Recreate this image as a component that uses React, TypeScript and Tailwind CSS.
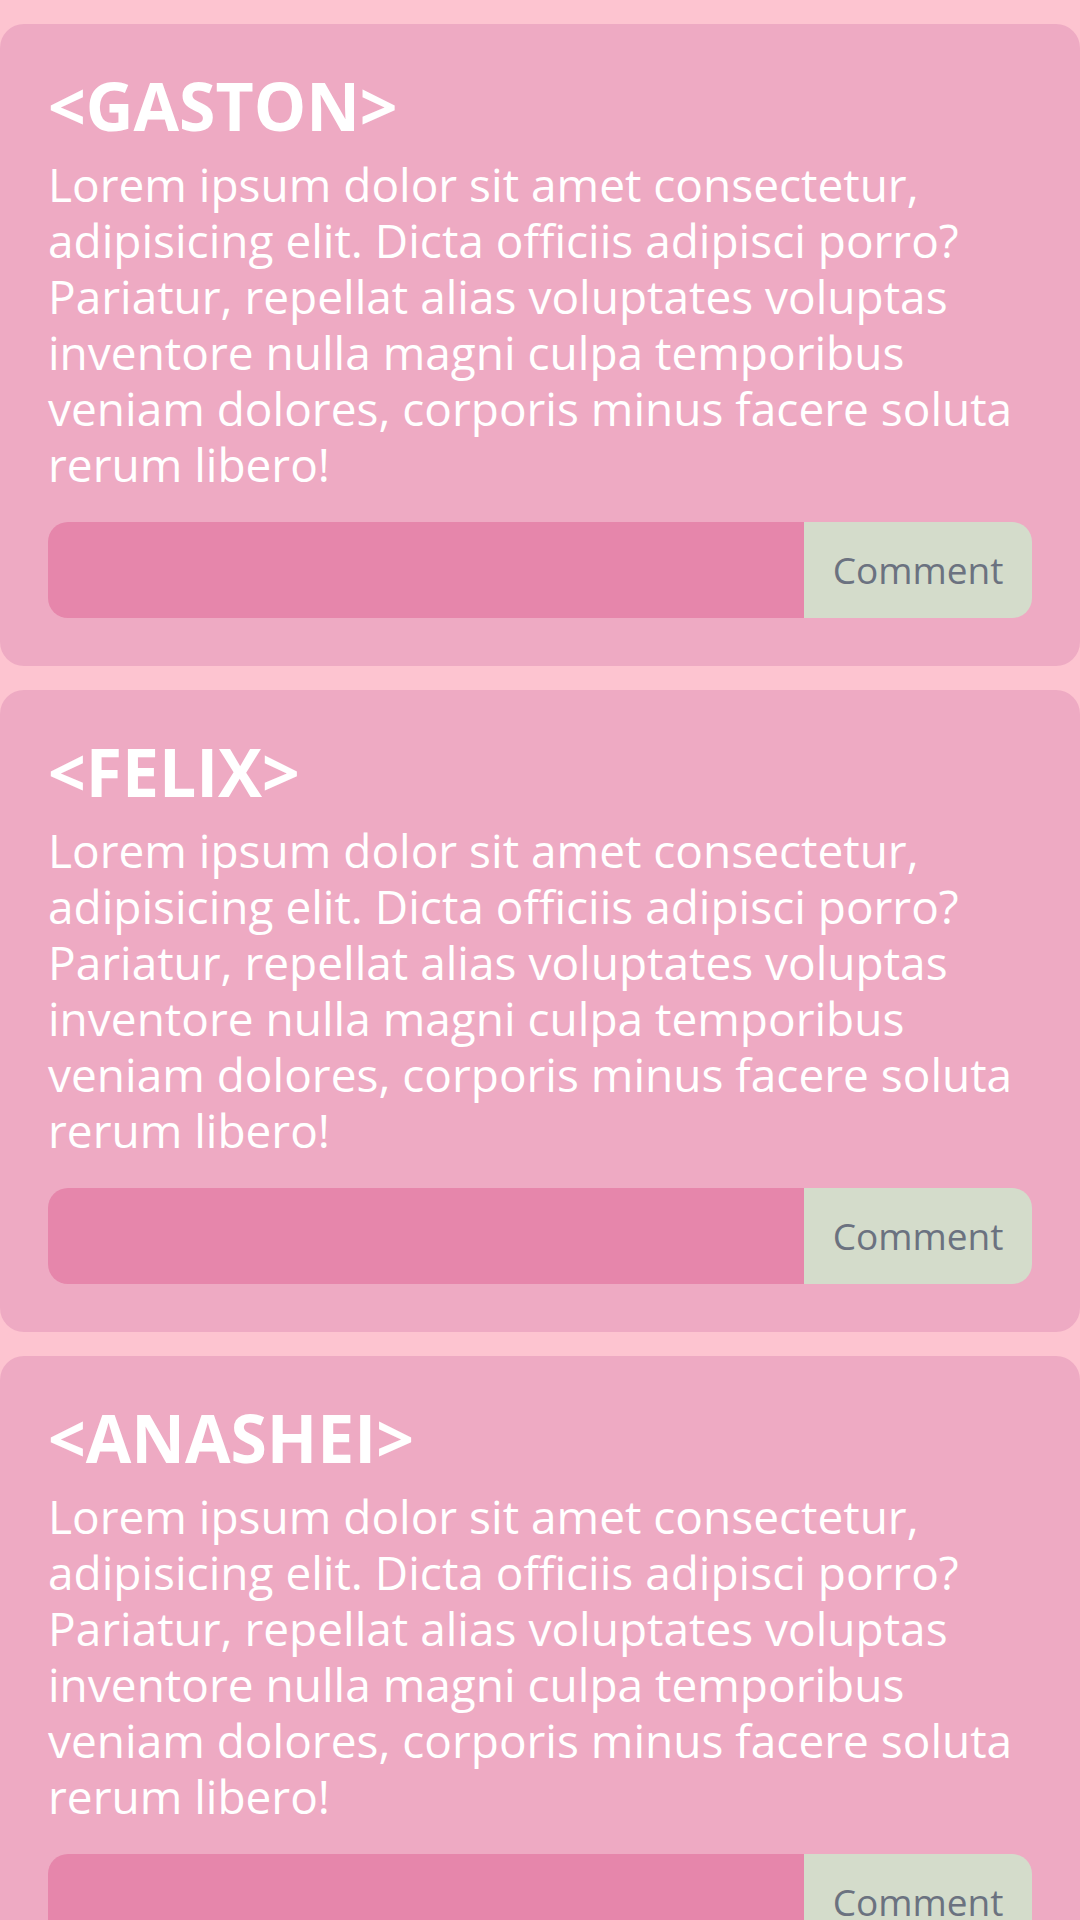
import type { FormEvent } from 'react'

const LOREM =
  'Lorem ipsum dolor sit amet consectetur, adipisicing elit. Dicta officiis adipisci porro? Pariatur, repellat alias voluptates voluptas inventore nulla magni culpa temporibus veniam dolores, corporis minus facere soluta rerum libero!'

const POSTS = [
  { name: 'GASTON', body: LOREM },
  { name: 'FELIX', body: LOREM },
  { name: 'ANASHEI', body: LOREM },
]

/** A single post card with a comment box under the text. */
function PostCard({ name, body }: { name: string; body: string }) {
  const onSubmit = (e: FormEvent) => e.preventDefault()

  return (
    <article className="rounded-3xl bg-[#eeaac3] p-12 text-white">
      <h2 className="text-[66px] font-bold leading-none">&lt;{name}&gt;</h2>
      <p className="mt-[18px] text-[46px] leading-[56px]">{body}</p>
      <form onSubmit={onSubmit} className="mt-[30px] flex h-24">
        <input
          type="text"
          aria-label={`Comment on ${name}`}
          className="min-w-0 flex-1 rounded-l-[20px] bg-[#e686ab] px-6 text-[37px] text-white outline-none"
        />
        <button
          type="submit"
          className="w-[228px] rounded-r-[20px] bg-[#d4dccb] text-[37px] text-[#6b7280]"
        >
          Comment
        </button>
      </form>
    </article>
  )
}

export default function App() {
  return (
    <main className="min-h-screen bg-[#fdc4d0] pt-6 font-['Open_Sans',sans-serif]">
      <div className="flex flex-col gap-6">
        {POSTS.map((post) => (
          <PostCard key={post.name} {...post} />
        ))}
      </div>
    </main>
  )
}
